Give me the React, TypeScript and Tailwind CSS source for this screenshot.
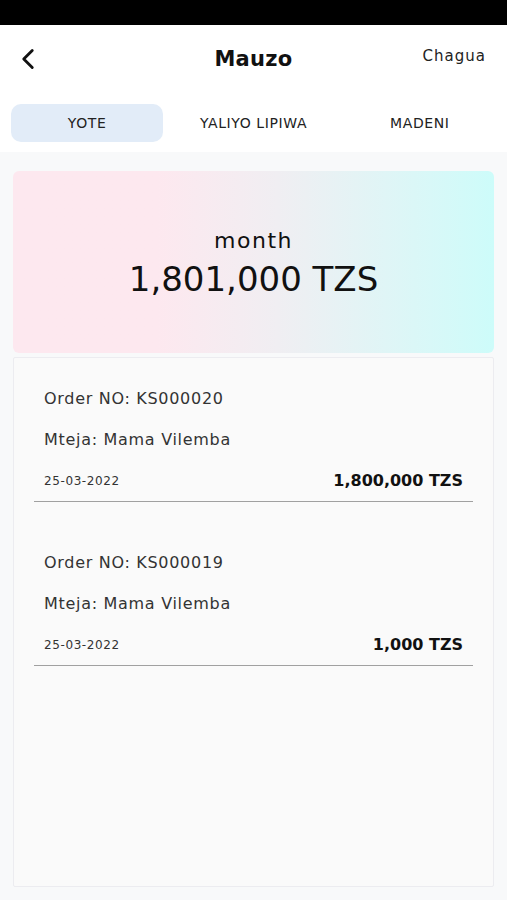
import { ChevronLeft } from 'lucide-react';

const orders = [
    { no: 'KS000020', customer: 'Mama Vilemba', date: '25-03-2022', amount: '1,800,000 TZS' },
    { no: 'KS000019', customer: 'Mama Vilemba', date: '25-03-2022', amount: '1,000 TZS' },
];

export default function App() {
    return (
        <div className="w-[507px] h-[900px] bg-[#f8f9fa] flex flex-col overflow-hidden" style={{ fontFamily: '"DejaVu Sans", sans-serif' }}>
            {/* Status bar */}
            <div className="h-[25px] bg-black shrink-0" />

            {/* Header */}
            <div className="bg-white shrink-0">
                <div className="h-[68px] relative flex items-center justify-center">
                    <button className="absolute left-[11px] top-[17px] text-[#111]">
                        <ChevronLeft className="w-[34px] h-[34px]" strokeWidth={2} />
                    </button>
                    <h1 className="text-[21px] font-bold text-[#111] mt-[1px] tracking-[0.3px]">Mauzo</h1>
                    <span className="absolute right-[21px] top-[20px] text-[15px] text-[#222] tracking-[1px]">Chagua</span>
                </div>

                {/* Tabs */}
                <div className="grid grid-cols-3 px-[11px] pb-[10px] pt-[11px] gap-[14px]">
                    <button className="h-[38px] rounded-[10px] bg-[#e2ecf8] text-[14px] tracking-[0.6px] text-[#222]">YOTE</button>
                    <button className="h-[38px] rounded-[10px] text-[14px] tracking-[0.6px] text-[#222]">YALIYO LIPIWA</button>
                    <button className="h-[38px] rounded-[10px] text-[14px] tracking-[0.6px] text-[#222]">MADENI</button>
                </div>
            </div>

            {/* Content */}
            <div className="flex-1 flex flex-col px-[13px] pt-[19px] pb-[13px] gap-[4px]">
                <div className="h-[182px] rounded-[6px] bg-gradient-to-r from-[#fde8ef] from-30% via-[#f0eef2] via-55% to-[#cdfcfa] flex flex-col items-center justify-center">
                    <div className="text-[22px] text-[#111] leading-none mt-[1px] tracking-[1.5px]">month</div>
                    <div className="text-[34px] text-[#111] leading-none mt-[10px]">1,801,000 TZS</div>
                </div>

                <div className="flex-1 bg-[#fafafa] border border-[#ececf0] rounded-[2px] px-[20px] pt-[31px]">
                    {orders.map((o) => (
                        <div key={o.no} className="border-b border-[#a0a0a0] mb-[51px]">
                            <div className="px-[10px] text-[16px] tracking-[0.7px] text-[#333] leading-[20px]">Order NO: {o.no}</div>
                            <div className="px-[10px] text-[16px] tracking-[0.7px] text-[#333] leading-[20px] mt-[21px]">Mteja: {o.customer}</div>
                            <div className="px-[10px] flex items-center justify-between mt-[19px] pb-[8px]">
                                <span className="text-[12px] tracking-[0.6px] text-[#333]">{o.date}</span>
                                <span className="text-[16px] font-bold text-[#111]">{o.amount}</span>
                            </div>
                        </div>
                    ))}
                </div>
            </div>
        </div>
    );
}
